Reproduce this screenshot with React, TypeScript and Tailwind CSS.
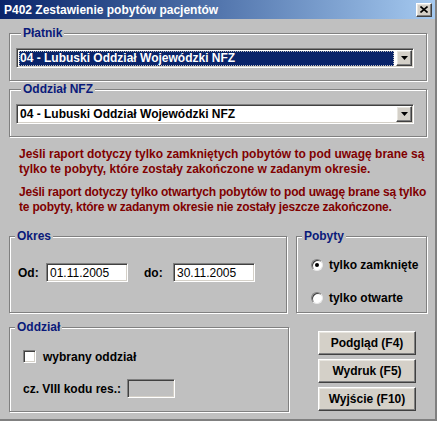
import React from 'react';

const font = { fontFamily: '"Liberation Sans", Arial, sans-serif' };

const sunken =
  'border border-t-[#808080] border-l-[#808080] border-r-white border-b-white shadow-[inset_1px_1px_0_#404040,inset_-1px_-1px_0_#d4d0c8]';
const raised =
  'border border-t-white border-l-white border-r-[#404040] border-b-[#404040] shadow-[inset_-1px_-1px_0_#808080,inset_1px_1px_0_#e8e6e0] bg-[#d4d0c8]';

function GroupBox({ title, className, children }: { title: string; className?: string; children: React.ReactNode }) {
  return (
    <fieldset className={`border border-[#808080] shadow-[inset_1px_1px_0_#fff,1px_1px_0_#fff] ${className ?? ''}`}>
      <legend className="ml-[5px] px-[2px] bg-[#c0c0c0] text-[12px] leading-[13px] font-bold text-[#0a1a7a]">
        {title}
      </legend>
      {children}
    </fieldset>
  );
}

function Arrow() {
  return (
    <svg width="7" height="4" viewBox="0 0 7 4">
      <path d="M0 0h7L3.5 4z" fill="#000" />
    </svg>
  );
}

function Combo({ selected }: { selected?: boolean }) {
  return (
    <div className={`h-[20px] w-[398px] bg-white flex items-center pl-[2px] pr-[1px] ${sunken}`}>
      <div
        className={`flex-1 h-[15px] flex items-center pl-[1px] text-[12px] font-bold ${
          selected ? 'bg-[#0a246a] text-white outline-1 outline-dotted outline-[#c0c0c0] -outline-offset-1' : 'text-black'
        }`}
      >
        04 - Lubuski Oddział Wojewódzki NFZ
      </div>
      <div className={`ml-[2px] w-[16px] h-[16px] flex items-center justify-center ${raised}`}>
        <Arrow />
      </div>
    </div>
  );
}

function Radio({ checked, label }: { checked?: boolean; label: string }) {
  return (
    <div className="flex items-center h-[14px]">
      <div className="w-[12px] h-[12px] shrink-0 rounded-full bg-white border border-t-[#808080] border-l-[#808080] border-r-[#e8e8e8] border-b-[#e8e8e8] shadow-[inset_1px_1px_0_#404040] flex items-center justify-center">
        {checked && <div className="w-[4px] h-[4px] rounded-full bg-black" />}
      </div>
      <span className="ml-[6px] text-[12px] font-bold whitespace-nowrap">{label}</span>
    </div>
  );
}

function Button({ children }: { children: React.ReactNode }) {
  return (
    <button className={`w-[98px] h-[24px] text-[12px] font-bold text-black ${raised}`}>{children}</button>
  );
}

export default function App() {
  return (
    <div style={font} className="w-[437px] h-[421px] bg-[#c0c0c0] text-black border-r-2 border-b-2 border-r-[#808080] border-b-[#808080] overflow-hidden">
      <div className="h-[19px] bg-gradient-to-r from-[#0a246a] to-[#a6caf0] flex items-center pl-[4px] pr-[3px]">
        <span className="text-white text-[12px] font-bold">P402 Zestawienie pobytów pacjentów</span>
        <div className={`ml-auto w-[16px] h-[14px] flex items-center justify-center ${raised}`}>
          <svg width="8" height="7" viewBox="0 0 8 7">
            <path d="M0.5 0.5l7 6M7.5 0.5l-7 6" stroke="#000" strokeWidth="1.6" />
          </svg>
        </div>
      </div>

      <div className="pl-[9px] pr-[8px] pt-[8px]">
        <GroupBox title="Płatnik" className="px-[6px] pt-[8px] pb-[12px]">
          <Combo selected />
        </GroupBox>
        <GroupBox title="Oddział NFZ" className="mt-[2px] px-[6px] pt-[8px] pb-[12px]">
          <Combo />
        </GroupBox>

        <div className="mt-[10px] pl-[10px] text-[12px] leading-[15px] font-bold text-[#800000] whitespace-nowrap">
          <p>
            Jeśli raport dotyczy tylko zamkniętych pobytów to pod uwagę brane są
            <br />
            tylko te pobyty, które zostały zakończone w zadanym okresie.
          </p>
          <p className="mt-[8px] tracking-[-0.2px]">
            Jeśli raport dotyczy tylko otwartych pobytów to pod uwagę brane są tylko
            <br />
            te pobyty, które w zadanym okresie nie zostały jeszcze zakończone.
          </p>
        </div>

        <div className="mt-[15px] flex gap-[9px]">
          <GroupBox title="Okres" className="w-[280px] h-[83px]">
            <div className="pt-[20px] pl-[8px] flex items-center text-[12px]">
              <span className="font-bold w-[28px]">Od:</span>
              <div className={`w-[82px] h-[19px] bg-white flex items-center pl-[3px] ${sunken}`}>01.11.2005</div>
              <span className="font-bold ml-[16px] w-[29px]">do:</span>
              <div className={`w-[82px] h-[19px] bg-white flex items-center pl-[3px] ${sunken}`}>30.11.2005</div>
            </div>
          </GroupBox>
          <GroupBox title="Pobyty" className="w-[132px] h-[83px]">
            <div className="pt-[15px] pl-[14px] flex flex-col gap-[19px]">
              <Radio checked label="tylko zamknięte" />
              <Radio label="tylko otwarte" />
            </div>
          </GroupBox>
        </div>

        <div className="mt-[8px] flex">
          <GroupBox title="Oddział" className="w-[280px] h-[91px]">
            <div className="pt-[16px] pl-[13px]">
              <div className="flex items-center h-[13px]">
                <div className={`w-[13px] h-[13px] shrink-0 bg-white ${sunken}`} />
                <span className="ml-[7px] text-[12px] font-bold whitespace-nowrap">wybrany oddział</span>
              </div>
              <div className="mt-[16px] flex items-center">
                <span className="w-[104px] shrink-0 text-[12px] font-bold whitespace-nowrap">cz. VIII kodu res.:</span>
                <div className={`w-[48px] h-[19px] shrink-0 bg-[#c0c0c0] ${sunken}`} />
              </div>
            </div>
          </GroupBox>
          <div className="ml-[29px] pt-[10px] flex flex-col gap-[4px]">
            <Button>Podgląd (F4)</Button>
            <Button>Wydruk (F5)</Button>
            <Button>Wyjście (F10)</Button>
          </div>
        </div>
      </div>
    </div>
  );
}
